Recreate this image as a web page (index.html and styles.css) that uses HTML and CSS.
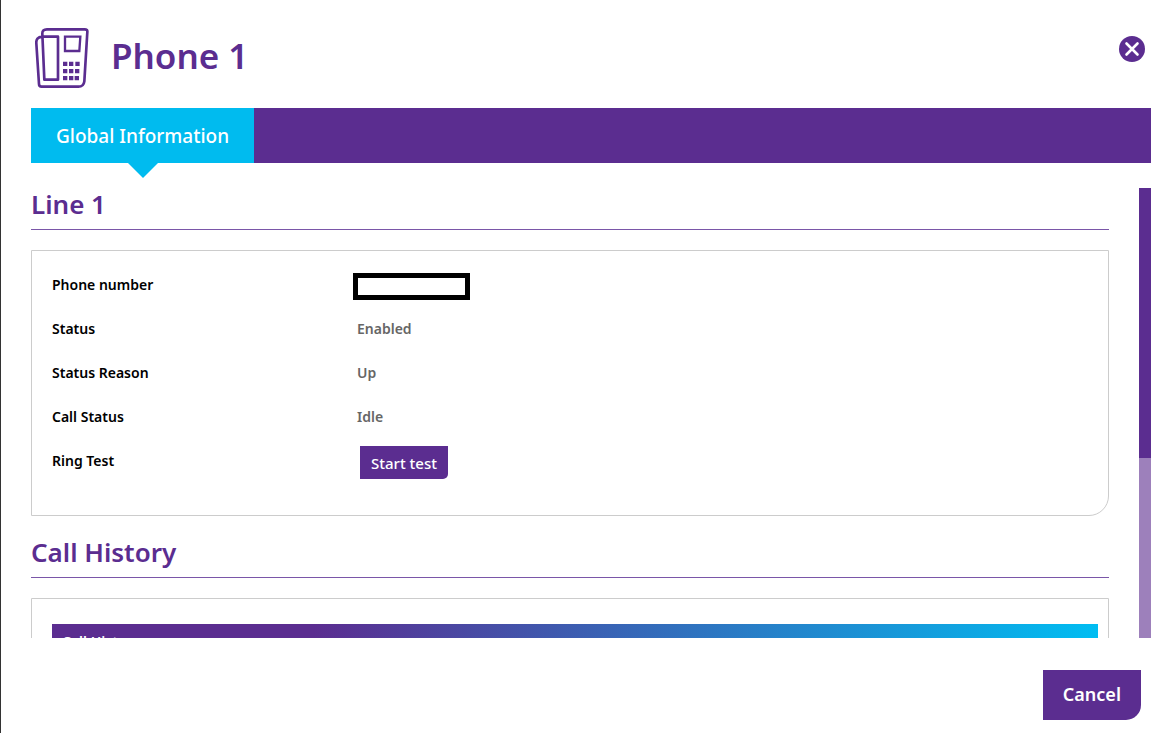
FILE: index.html
```html
<!DOCTYPE html>
<html lang="en">
<head>
    <meta charset="UTF-8">
    <meta name="viewport" content="width=device-width, initial-scale=1.0">
    <title>Phone 1</title>
    <link rel="stylesheet" href="styles.css">
</head>
<body>
    <div class="dialog">
        <header class="dialog-header">
            <svg class="phone-icon" viewBox="0 0 162 180" aria-hidden="true">
                <g fill="none" stroke="#5b2d90" stroke-width="8" stroke-linejoin="round">
                    <path d="M22 26C8 27 3 34 4 46L12 168Q12 176 20 176H130Q146 176 148 160L157 12Q158 4 149 4H36Q21 4 22 18L28 155H69V26H22"/>
                    <path d="M90 26H136L133 69H90Z" stroke-width="7" stroke-linejoin="miter"/>
                </g>
                <g fill="#5b2d90">
                    <path d="M84 101h13v13h-13zM102 101h13v13h-13zM121 101h13v13h-13z"/>
                    <path d="M84 123h13v13h-13zM102 123h13v13h-13zM120 123h13v13h-13z"/>
                    <path d="M84 144h13v13h-13zM102 144h13v13h-13zM119 144h13v13h-13z"/>
                </g>
            </svg>
            <h1>Phone 1</h1>
            <button type="button" class="close-button" aria-label="Close">
                <svg viewBox="0 0 26 26" aria-hidden="true">
                    <circle cx="13" cy="13" r="13" fill="#5b2d90"/>
                    <path d="M7.500 7.500L18.500 18.500M18.500 7.500L7.500 18.500" stroke="#fff" stroke-width="2.600" stroke-linecap="round"/>
                </svg>
            </button>
        </header>

        <nav class="tabs">
            <button type="button" class="tab active">Global Information</button>
        </nav>

        <main class="scroll-area">
            <div class="scroll-content">
                <h2>Line 1</h2>
                <div class="panel line-panel">
                    <div class="row">
                        <label for="phoneNumber">Phone number</label>
                        <input type="text" id="phoneNumber" readonly>
                    </div>
                    <div class="row">
                        <span class="name">Status</span>
                        <span class="value">Enabled</span>
                    </div>
                    <div class="row">
                        <span class="name">Status Reason</span>
                        <span class="value">Up</span>
                    </div>
                    <div class="row">
                        <span class="name">Call Status</span>
                        <span class="value">Idle</span>
                    </div>
                    <div class="row">
                        <span class="name">Ring Test</span>
                        <button type="button" class="start-button">Start test</button>
                    </div>
                </div>

                <h2>Call History</h2>
                <div class="panel history-panel">
                    <h3>Call History</h3>
                </div>
            </div>
            <div class="scroll-track">
                <div class="scroll-thumb"></div>
            </div>
        </main>

        <footer class="dialog-footer">
            <button type="button" class="cancel-button">Cancel</button>
        </footer>
    </div>
</body>
</html>
```
FILE: styles.css
```css
* {
    box-sizing: border-box;
}
body {
    margin: 0;
    font-family: "Noto Sans", "Open Sans", sans-serif;
    background-color: #fff;
    color: #000;
}
button {
    font-family: inherit;
    background-color: #5b2d90;
    color: white;
    border: none;
    padding: 0;
    cursor: pointer;
}
h1, h2, h3 {
    margin: 0;
    font-weight: 600;
    color: #5b2d90;
}
.dialog {
    display: flex;
    flex-direction: column;
    height: 100vh;
    padding: 0 21px 0 30px;
    border-left: 1px solid #333;
}
.dialog-header {
    display: flex;
    align-items: center;
    height: 108px;
    padding: 0 6px 0 4px;
}
.phone-icon {
    width: 54px;
    height: 60px;
    margin-top: 8px;
}
h1 {
    flex: 1;
    margin: 4px 0 0 22px;
    font-size: 35px;
    line-height: 48px;
}
.close-button {
    width: 26px;
    height: 26px;
    margin-bottom: 10px;
    background: none;
}
.close-button svg {
    display: block;
}
.tabs {
    display: flex;
    height: 55px;
    background-color: #5b2d90;
}
.tab {
    position: relative;
    padding: 0 25px;
    font-size: 19px;
    font-weight: 500;
}
.tab.active {
    background-color: #00bbef;
}
.tab.active::after {
    content: "";
    position: absolute;
    top: 100%;
    left: 50%;
    margin-left: -15px;
    border: 15px solid transparent;
    border-top-color: #00bbef;
    border-bottom: 0;
}
.scroll-area {
    display: flex;
    flex: 1;
    gap: 30px;
    min-height: 0;
    margin-top: 20px;
}
.scroll-content {
    flex: 1;
    padding-top: 5px;
    overflow-y: auto;
    scrollbar-width: none;
}
.scroll-track {
    width: 12px;
    margin-top: 5px;
    background-color: #9d80bb;
}
.scroll-thumb {
    height: 60%;
    background-color: #5b2d90;
}
h2 {
    height: 42px;
    margin-bottom: 20px;
    font-size: 26px;
    line-height: 32px;
    border-bottom: 1px solid #7a56a8;
}
.panel {
    margin-bottom: 20px;
    border: 1px solid #ccc;
    border-bottom-right-radius: 20px;
}
.line-panel {
    padding: 11px 20px 33px;
}
.row {
    display: flex;
    align-items: center;
    height: 44px;
    font-size: 14px;
    font-weight: 600;
}
.row label, .row .name {
    width: 301px;
}
.value {
    padding-left: 4px;
    color: #666;
}
.row input {
    width: 117px;
    height: 27px;
    margin-top: 4px;
    border: 5px solid #000;
    background-color: #fff;
}
.start-button {
    height: 33px;
    margin: 5px 0 0 7px;
    padding: 0 11px;
    font-size: 15px;
    font-weight: 500;
    border-bottom-right-radius: 5px;
}
.history-panel {
    padding: 25px 10px 25px 20px;
}
h3 {
    padding: 8px 10px;
    font-size: 14px;
    line-height: 20px;
    color: white;
    background: linear-gradient(to right, #5b2d90 25%, #00bdf2);
}
.dialog-footer {
    display: flex;
    justify-content: flex-end;
    padding: 32px 10px 13px;
}
.cancel-button {
    height: 50px;
    padding: 0 20px 3px;
    font-size: 18px;
    font-weight: 600;
    border-bottom-right-radius: 15px;
}
```
